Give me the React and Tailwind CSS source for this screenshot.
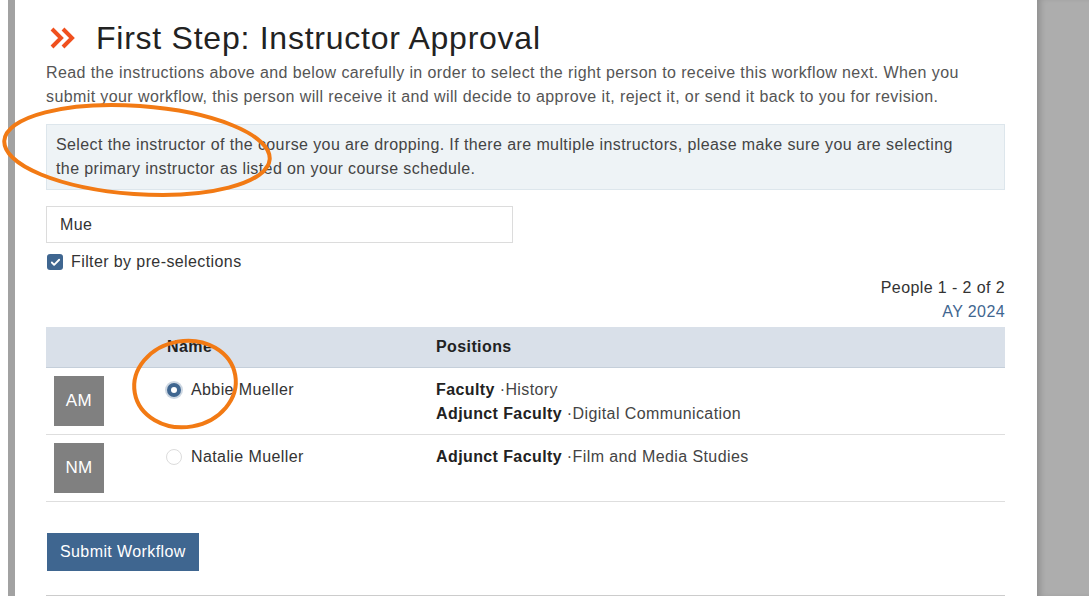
import { Check } from "lucide-react";

const people = [
  {
    initials: "AM",
    name: "Abbie Mueller",
    selected: true,
    positions: [
      { title: "Faculty", dept: "History" },
      { title: "Adjunct Faculty", dept: "Digital Communication" },
    ],
  },
  {
    initials: "NM",
    name: "Natalie Mueller",
    selected: false,
    positions: [{ title: "Adjunct Faculty", dept: "Film and Media Studies" }],
  },
];

function Radio({ checked }) {
  if (checked) {
    return (
      <span className="flex h-[18px] w-[18px] items-center justify-center rounded-full bg-[#cdd7e2]">
        <span className="flex h-[14px] w-[14px] items-center justify-center rounded-full bg-[#3f6690]">
          <span className="h-[6px] w-[6px] rounded-full bg-white"></span>
        </span>
      </span>
    );
  }
  return (
    <span className="flex h-[18px] w-[18px] items-center justify-center">
      <span className="h-[16px] w-[16px] rounded-full border border-[#dcdcdc] bg-white"></span>
    </span>
  );
}

export default function App() {
  return (
    <div
      className="relative flex h-[596px] w-full overflow-hidden bg-white tracking-[0.4px] text-[#333]"
      style={{ fontFamily: '"Liberation Sans", Arial, sans-serif' }}
    >
      <div className="w-[8px] shrink-0 bg-white"></div>
      <div className="w-[7px] shrink-0 bg-[#a2a2a2]"></div>

      <div className="flex-1 pl-[31px] pr-[32px] pt-[18px]">
        {/* heading */}
        <div className="flex items-center gap-[20px]">
          <svg width="26" height="22" viewBox="0 0 26 22" className="ml-[4px]">
            <path d="M2 2 L11 11 L2 20" fill="none" stroke="#f0501e" strokeWidth="4" />
            <path d="M13 2 L22 11 L13 20" fill="none" stroke="#f0501e" strokeWidth="4" />
          </svg>
          <h1 className="text-[32px] leading-[40px] tracking-[0.75px] text-[#222]">First Step: Instructor Approval</h1>
        </div>

        <p className="mt-[3px] text-[16px] leading-[24px] text-[#555]">
          Read the instructions above and below carefully in order to select the right person to receive this workflow next. When you submit your workflow, this person will receive it and will decide to approve it, reject it, or send it back to you for revision.
        </p>

        <div className="mt-[15px] border border-[#dde6ec] bg-[#eef3f6] py-[8px] pl-[9px] pr-[30px] text-[16px] leading-[24px] text-[#444]">
          Select the instructor of the course you are dropping. If there are multiple instructors, please make sure you are selecting the primary instructor as listed on your course schedule.
        </div>

        <div className="mt-[16px] flex h-[37px] w-[467px] items-center border border-[#dcdcdc] px-[13px] text-[16px] text-[#333]">
          Mue
        </div>

        <label className="mt-[7px] flex items-center gap-[8px] text-[16px] text-[#333]">
          <span className="ml-[1px] flex h-[16px] w-[16px] items-center justify-center rounded-[3px] bg-[#3f6690]">
            <Check size={11} strokeWidth={4} color="white" />
          </span>
          Filter by pre-selections
        </label>

        <div className="mt-[2px] text-right text-[16px] leading-[24px]">
          <div className="text-[#333]">People 1 - 2 of 2</div>
          <div className="text-[#3f6690]">AY 2024</div>
        </div>

        <table className="mt-[3px] w-full border-collapse text-[16px]">
          <thead>
            <tr className="h-[40px] border-b border-[#c5cfda] bg-[#d9e0e9] text-left">
              <th className="w-[109px]"></th>
              <th className="w-[270px] pl-[12px] font-bold text-[#222]">Name</th>
              <th className="pl-[11px] font-bold text-[#222]">Positions</th>
            </tr>
          </thead>
          <tbody>
            {people.map((p) => (
              <tr key={p.initials} className="border-b border-[#dedede] align-top">
                <td className="py-[8px] pl-[8px]">
                  <div className="flex h-[50px] w-[50px] items-center justify-center bg-[#808080] text-[17px] text-white">
                    {p.initials}
                  </div>
                </td>
                <td className="pl-[10px] pt-[10px]">
                  <div className="flex items-center gap-[8px] leading-[24px] text-[#333]">
                    <Radio checked={p.selected} />
                    {p.name}
                  </div>
                </td>
                <td className="pl-[11px] pt-[10px] leading-[24px]">
                  {p.positions.map((pos) => (
                    <div key={pos.title + pos.dept}>
                      <span className="font-bold text-[#222]">{pos.title}</span>
                      <span className="text-[#444]"> ·{pos.dept}</span>
                    </div>
                  ))}
                </td>
              </tr>
            ))}
          </tbody>
        </table>

        <button className="mt-[31px] ml-[1px] h-[38px] bg-[#3f6690] px-[13px] text-[16px] text-white">
          Submit Workflow
        </button>

        <div className="mt-[24px] border-t border-[#cccccc]"></div>
      </div>

      <div
        className="w-[52px] shrink-0 bg-[#adadad]"
        style={{ boxShadow: "inset 6px 0 6px -3px rgba(0,0,0,0.18)" }}
      ></div>

      {/* annotation marks */}
      <svg className="pointer-events-none absolute left-0 top-0" width="1089" height="596">
        <ellipse cx="137" cy="150" rx="133" ry="44" transform="rotate(4 137 150)" fill="none" stroke="#f27a14" strokeWidth="4" />
        <ellipse cx="185" cy="384" rx="51" ry="43" transform="rotate(-10 185 384)" fill="none" stroke="#f27a14" strokeWidth="4" />
      </svg>
    </div>
  );
}
